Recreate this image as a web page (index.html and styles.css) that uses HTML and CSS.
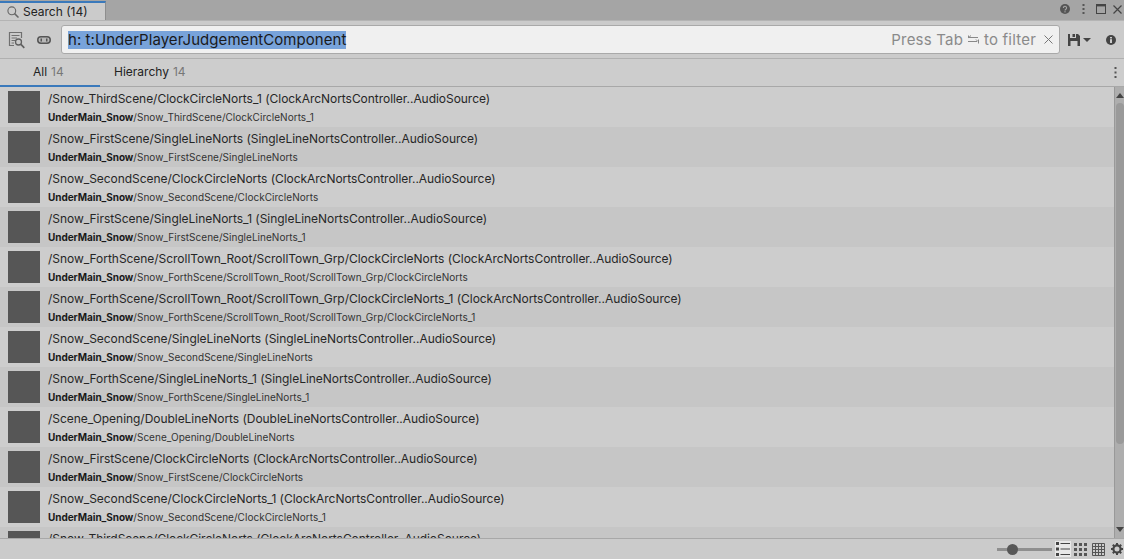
FILE: index.html
```html
<!DOCTYPE html>
<html lang="en">
<head>
<meta charset="utf-8">
<title>Search (14)</title>
<link rel="stylesheet" href="styles.css">
</head>
<body>
<div class="window">
  <header class="titlebar">
    <div class="tab">
      <svg class="tab-icon" viewBox="0 0 12 12"><circle cx="4.8" cy="4.8" r="3.9" fill="none" stroke="#666" stroke-width="1.1"/><path d="M7.6 7.6L11.5 11.5" stroke="#666" stroke-width="1.5"/></svg>
      <span>Search (14)</span>
    </div>
    <div class="title-actions">
      <svg class="act-help" width="10" height="10" viewBox="0 0 10 10"><circle cx="5" cy="5" r="5" fill="#555"/><path d="M3.4 3.9a1.6 1.6 0 1 1 2.5 1.3c-.6.4-.9.6-.9 1.2" fill="none" stroke="#a5a5a5" stroke-width="1.1"/><rect x="4.4" y="7.2" width="1.2" height="1.2" fill="#a5a5a5"/></svg>
      <svg class="act-dots" width="3" height="10" viewBox="0 0 3 10"><rect x=".5" y="0" width="2" height="2" fill="#555"/><rect x=".5" y="4" width="2" height="2" fill="#555"/><rect x=".5" y="8" width="2" height="2" fill="#555"/></svg>
      <svg class="act-max" width="10" height="10" viewBox="0 0 10 10"><rect x=".5" y=".5" width="9" height="9" fill="none" stroke="#444"/><rect width="10" height="2.4" fill="#444"/></svg>
      <svg class="act-close" width="9" height="9" viewBox="0 0 9 9"><path d="M.5 .5L8.5 8.5M8.5 .5L.5 8.5" stroke="#444" stroke-width="1.2"/></svg>
    </div>
  </header>

  <div class="toolbar">
    <svg class="tool-doc" width="17" height="18" viewBox="0 0 17 18"><path d="M6 14.5H1.5V1.5H13.5V7" fill="none" stroke="#707070" stroke-width="1.2"/><path d="M3.5 4.5H11.5M3.5 7H9M3.5 9.5H7M3.5 12H6" stroke="#707070"/><circle cx="10.5" cy="11" r="3" fill="none" stroke="#606060" stroke-width="1.3"/><path d="M12.7 13.2L16.3 16.8" stroke="#606060" stroke-width="1.7"/></svg>
    <svg class="tool-pill" width="14" height="8" viewBox="0 0 14 8"><rect x=".75" y=".75" width="12.5" height="6.5" rx="3.2" fill="#b8b8b8" stroke="#555" stroke-width="1.5"/><rect x="3.5" y="2.5" width="1.5" height="3" fill="#555"/><rect x="9" y="2.5" width="1.5" height="3" fill="#555"/></svg>
    <div class="search">
      <span class="query">h: t:UnderPlayerJudgementComponent</span>
      <span class="hint">Press Tab
        <svg class="tab-glyph" width="11" height="9" viewBox="0 0 11 9"><path d="M0 2.5H10M0 6.5H9M3 .5L.8 2.5M8 4.5L10 6.5M10.5 4.5V8.5M.5 .5V3" fill="none" stroke="#888"/></svg>
        to filter</span>
      <svg class="clear" width="9" height="9" viewBox="0 0 9 9"><path d="M.5 .5L8.5 8.5M8.5 .5L.5 8.5" stroke="#777"/></svg>
    </div>
    <svg class="save" width="12" height="12" viewBox="0 0 12 12"><path d="M0 0H2V4H8V0H10L12 2V12H0Z" fill="#444"/><rect x="4.5" y="0" width="2.5" height="3" fill="#444"/><rect x="2.5" y="7" width="7" height="5" fill="#ccc"/></svg>
    <svg class="caret" width="8" height="4" viewBox="0 0 8 4"><path d="M0 0H8L4 4Z" fill="#444"/></svg>
    <svg class="info" width="10" height="10" viewBox="0 0 10 10"><circle cx="5" cy="5" r="5" fill="#444"/><rect x="4" y="4.2" width="2" height="3.8" fill="#ccc"/><rect x="4" y="2" width="2" height="1.4" fill="#ccc"/></svg>
  </div>

  <nav class="filters">
    <div class="filter active">All <span class="count">14</span></div>
    <div class="filter">Hierarchy <span class="count">14</span></div>
    <svg class="menu" width="3" height="11" viewBox="0 0 3 11"><rect x=".5" width="2" height="2" fill="#555"/><rect x=".5" y="4.5" width="2" height="2" fill="#555"/><rect x=".5" y="9" width="2" height="2" fill="#555"/></svg>
  </nav>

  <main class="results">
    <div class="list">
      <div class="row"><div class="thumb"></div><div class="text"><div class="label">/Snow_ThirdScene/ClockCircleNorts_1 (ClockArcNortsController..AudioSource)</div><div class="desc"><b>UnderMain_Snow</b>/Snow_ThirdScene/ClockCircleNorts_1</div></div></div>
      <div class="row"><div class="thumb"></div><div class="text"><div class="label">/Snow_FirstScene/SingleLineNorts (SingleLineNortsController..AudioSource)</div><div class="desc"><b>UnderMain_Snow</b>/Snow_FirstScene/SingleLineNorts</div></div></div>
      <div class="row"><div class="thumb"></div><div class="text"><div class="label">/Snow_SecondScene/ClockCircleNorts (ClockArcNortsController..AudioSource)</div><div class="desc"><b>UnderMain_Snow</b>/Snow_SecondScene/ClockCircleNorts</div></div></div>
      <div class="row"><div class="thumb"></div><div class="text"><div class="label">/Snow_FirstScene/SingleLineNorts_1 (SingleLineNortsController..AudioSource)</div><div class="desc"><b>UnderMain_Snow</b>/Snow_FirstScene/SingleLineNorts_1</div></div></div>
      <div class="row"><div class="thumb"></div><div class="text"><div class="label">/Snow_ForthScene/ScrollTown_Root/ScrollTown_Grp/ClockCircleNorts (ClockArcNortsController..AudioSource)</div><div class="desc"><b>UnderMain_Snow</b>/Snow_ForthScene/ScrollTown_Root/ScrollTown_Grp/ClockCircleNorts</div></div></div>
      <div class="row"><div class="thumb"></div><div class="text"><div class="label">/Snow_ForthScene/ScrollTown_Root/ScrollTown_Grp/ClockCircleNorts_1 (ClockArcNortsController..AudioSource)</div><div class="desc"><b>UnderMain_Snow</b>/Snow_ForthScene/ScrollTown_Root/ScrollTown_Grp/ClockCircleNorts_1</div></div></div>
      <div class="row"><div class="thumb"></div><div class="text"><div class="label">/Snow_SecondScene/SingleLineNorts (SingleLineNortsController..AudioSource)</div><div class="desc"><b>UnderMain_Snow</b>/Snow_SecondScene/SingleLineNorts</div></div></div>
      <div class="row"><div class="thumb"></div><div class="text"><div class="label">/Snow_ForthScene/SingleLineNorts_1 (SingleLineNortsController..AudioSource)</div><div class="desc"><b>UnderMain_Snow</b>/Snow_ForthScene/SingleLineNorts_1</div></div></div>
      <div class="row"><div class="thumb"></div><div class="text"><div class="label">/Scene_Opening/DoubleLineNorts (DoubleLineNortsController..AudioSource)</div><div class="desc"><b>UnderMain_Snow</b>/Scene_Opening/DoubleLineNorts</div></div></div>
      <div class="row"><div class="thumb"></div><div class="text"><div class="label">/Snow_FirstScene/ClockCircleNorts (ClockArcNortsController..AudioSource)</div><div class="desc"><b>UnderMain_Snow</b>/Snow_FirstScene/ClockCircleNorts</div></div></div>
      <div class="row"><div class="thumb"></div><div class="text"><div class="label">/Snow_SecondScene/ClockCircleNorts_1 (ClockArcNortsController..AudioSource)</div><div class="desc"><b>UnderMain_Snow</b>/Snow_SecondScene/ClockCircleNorts_1</div></div></div>
      <div class="row"><div class="thumb"></div><div class="text"><div class="label">/Snow_ThirdScene/ClockCircleNorts (ClockArcNortsController..AudioSource)</div></div></div>
    </div>
    <div class="scrollbar">
      <svg class="arrow" width="8" height="5" viewBox="0 0 8 5"><path d="M0 5H8L4 0Z" fill="#444"/></svg>
      <div class="track"><div class="thumb-bar"></div></div>
      <svg class="arrow" width="8" height="5" viewBox="0 0 8 5"><path d="M0 0H8L4 5Z" fill="#444"/></svg>
    </div>
  </main>

  <footer class="status">
    <div class="slider"><div class="knob"></div></div>
    <div class="view selected"><svg width="14" height="14" viewBox="0 0 14 14"><g fill="#444"><rect y="0" width="3" height="3"/><rect y="5.5" width="3" height="3"/><rect y="11" width="3" height="3"/><rect x="4.5" y="1" width="9.5" height="1"/><rect x="4.5" y="6.5" width="9.5" height="1"/><rect x="4.5" y="12" width="9.5" height="1"/></g></svg></div>
    <div class="view"><svg width="13" height="13" viewBox="0 0 13 13"><g fill="#555"><rect width="3" height="3"/><rect x="5" width="3" height="3"/><rect x="10" width="3" height="3"/><rect y="5" width="3" height="3"/><rect x="5" y="5" width="3" height="3"/><rect x="10" y="5" width="3" height="3"/><rect y="10" width="3" height="3"/><rect x="5" y="10" width="3" height="3"/><rect x="10" y="10" width="3" height="3"/></g></svg></div>
    <div class="view"><svg width="13" height="13" viewBox="0 0 13 13"><path d="M.5 .5H12.5V12.5H.5ZM.5 3.5H12.5M.5 6.5H12.5M.5 9.5H12.5M3.5 .5V12.5M6.5 .5V12.5M9.5 .5V12.5" fill="none" stroke="#555"/></svg></div>
    <svg class="gear" width="12" height="12" viewBox="0 0 12 12"><circle cx="6" cy="6" r="3.6" fill="none" stroke="#444" stroke-width="2.2"/><path d="M6 0V2M6 10V12M0 6H2M10 6H12M1.8 1.8L3.2 3.2M8.8 8.8L10.2 10.2M1.8 10.2L3.2 8.8M8.8 3.2L10.2 1.8" stroke="#444" stroke-width="2"/></svg>
  </footer>
</div>
</body>
</html>
```

FILE: styles.css
```css
* { box-sizing: border-box; }
html, body { margin: 0; height: 100%; overflow: hidden; }
body { font-family: Inter, "Liberation Sans", sans-serif; color: #101010; background: #cbcbcb; }
.window { width: 1124px; height: 559px; display: flex; flex-direction: column; }

.titlebar { height: 20px; background: #a5a5a5; display: flex; justify-content: space-between; flex: none; }
.tab { width: 106px; height: 19px; margin-top: 1px; background: #cbcbcb; border-top: 2px solid #3a79bb; border-right: 1px solid #8e8e8e; display: flex; align-items: center; padding-left: 7px; gap: 4px; font-size: 12px; color: #222; }
.tab-icon { width: 12px; height: 12px; }
.title-actions { display: flex; align-items: center; padding-right: 2px; height: 18px; }
.act-dots { margin-left: 12px; }
.act-max { margin-left: 11px; }
.act-close { margin-left: 7px; }

.toolbar { height: 39px; flex: none; background: #cbcbcb; border-top: 1px solid #b4b4b4; border-bottom: 1px solid #b0b0b0; display: flex; align-items: center; padding: 0 8px 0 8px; }
.tool-doc { margin-right: 12px; }
.tool-pill { margin-right: 10px; }
.search { width: 999px; height: 29px; background: #f0f0f0; border: 1px solid #a9a9a9; border-radius: 3px; display: flex; align-items: center; padding: 0 6px 0 6px; font-size: 15px; }
.query { background: #78a3da; color: #1a1a1a; line-height: 18px; white-space: nowrap; letter-spacing: .06px; }
.hint { margin-left: auto; color: #8a8a8a; display: flex; align-items: center; gap: 5px; letter-spacing: .2px; margin-right: 8px; }
.clear { flex: none; }
.save { margin-left: 8px; }
.caret { margin-left: 3px; }
.info { margin-left: auto; }

.filters { height: 28px; flex: none; background: #cdcdcd; border-bottom: 1px solid #a8a8a8; display: flex; align-items: center; font-size: 12px; color: #222; }
.filter { height: 27px; display: flex; align-items: center; gap: 4px; width: 100px; padding: 0 0 3px 33px; }
.filter.active { box-shadow: inset 0 -1px 0 #3a79bb, 0 1px 0 #3a79bb; }
.filter + .filter { width: 114px; padding-left: 14px; }
.count { color: #777; }
.menu { margin-left: auto; margin-right: 7px; }

.results { flex: 1; min-height: 0; display: flex; overflow: hidden; }
.list { flex: 1; min-width: 0; overflow: hidden; }
.row { height: 40px; display: flex; align-items: flex-start; padding: 4px 0 0 8px; background: #cdcdcd; }
.row:nth-child(even) { background: #c6c6c6; }
.thumb { width: 32px; height: 32px; background: #565656; flex: none; }
.text { margin-left: 8px; }
.label { font-size: 12px; line-height: 15px; color: #262626; white-space: nowrap; letter-spacing: -.04px; }
.desc { font-size: 10px; line-height: 13px; margin-top: 5px; color: #333; white-space: nowrap; letter-spacing: .03px; }
.desc b { font-weight: 700; color: #1a1a1a; letter-spacing: -.06px; }

.scrollbar { width: 10px; flex: none; background: #aeaeae; border-left: 1px solid #999; display: flex; flex-direction: column; align-items: center; padding: 6px 0 6px; }
.track { flex: 1; width: 100%; padding: 5px 0 0 1px; }
.thumb-bar { width: 8px; height: 341px; border-radius: 4px; background: #9a9a9a; }

.status { height: 21px; flex: none; background: #cbcbcb; border-top: 1px solid #a8a8a8; display: flex; align-items: center; }
.slider { width: 55px; height: 3px; background: #8f8f8f; position: relative; margin-left: 997px; margin-right: 3px; }
.knob { position: absolute; left: 10px; top: -4px; width: 11px; height: 11px; border-radius: 50%; background: #575757; }
.view { width: 15px; height: 16px; display: flex; align-items: center; justify-content: center; margin-right: 3px; }
.view.selected { width: 16px; margin-right: 2px; background: #e8e8e8; }
.gear { margin-left: 2px; }
```
